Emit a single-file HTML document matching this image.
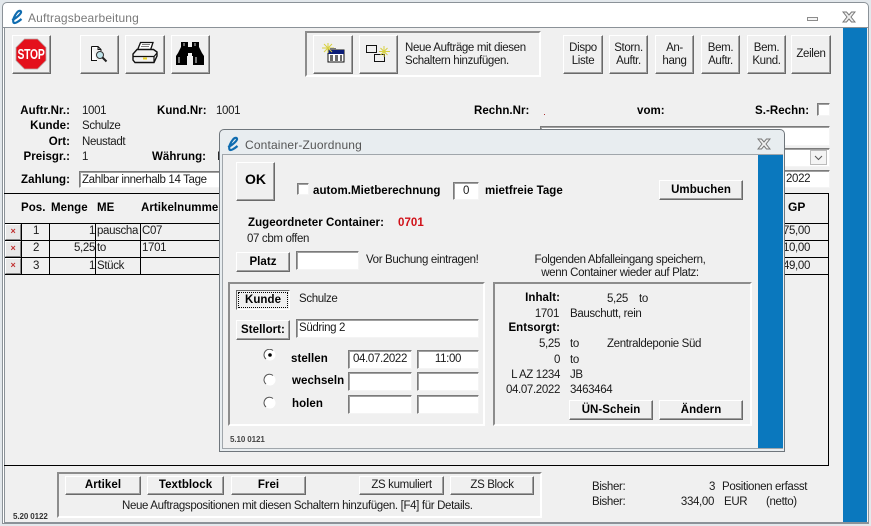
<!DOCTYPE html>
<html><head><meta charset="utf-8">
<style>
html,body{margin:0;padding:0;background:#dfe4e9}
#r{position:relative;width:871px;height:526px;overflow:hidden;background:#e3e8ec;font:11.5px "Liberation Sans",sans-serif;letter-spacing:-.35px;color:#111}
#r div,#r svg{position:absolute}
.t{white-space:nowrap;line-height:14px;color:#1a1a1a;margin-top:1px}
#r .b{font-weight:bold;letter-spacing:.05px;color:#000}
.btn{box-sizing:border-box;background:#f0f0f0;border:1px solid;border-color:#fff #6a6a6a #6a6a6a #fff;box-shadow:inset -1px -1px 0 #a0a0a0;text-align:center;align-items:center;justify-content:center;line-height:13px;color:#1a1a1a}
#r .btn{display:flex}
.in{box-sizing:border-box;background:#fff;border:1px solid;border-color:#7b7b7b #f4f4f4 #f4f4f4 #7b7b7b;box-shadow:inset 1px 1px 0 #a0a0a0;line-height:17px;padding-left:2px;color:#1a1a1a;white-space:nowrap;overflow:hidden}
.grp{box-sizing:border-box;border:2px solid;border-color:#8c8c8c #fff #fff #8c8c8c}
.l{background:#000}
.x{box-sizing:border-box;background:#e8e8e8;border:1px solid;border-color:#fff #888 #888 #fff;color:#c03030;font-size:9px;line-height:13px;text-align:center;font-weight:bold}
</style></head><body>
<div id="r">
<!-- main window -->
<div style="left:2px;top:2px;width:867px;height:522px;box-sizing:border-box;border:1px solid #8b9298;border-radius:5px 5px 0 0;background:#fff"></div>
<div style="left:3px;top:27px;width:865px;height:1px;background:#8b9298"></div>
<div style="left:4px;top:28px;width:864px;height:494px;background:#f0f0f0;border-left:1px solid #8b9298;box-sizing:border-box"></div>
<div style="left:843px;top:28px;width:24px;height:494px;background:#0a78be"></div>
<div style="left:4px;top:522px;width:864px;height:1px;background:#8b9298"></div>
<svg style="left:10px;top:9px" width="16" height="16" viewBox="0 0 16 16"><path d="M2 11C5 10 10 6 11 3.500C11.500 1.500 9 1 7 3.500C4.500 6.500 2.500 11 3.500 13.500C4.500 15 8 13 11.500 10" fill="none" stroke="#0f6cb0" stroke-width="2.200"/></svg>
<div class="t" style="left:28px;top:10px;font-size:12px;letter-spacing:.15px;color:#7a7a7a">Auftragsbearbeitung</div>
<div style="left:807px;top:17px;width:11px;height:4px;box-sizing:border-box;border:1px solid #8c8c8c;background:#f4f4f4"></div>
<svg style="left:842px;top:11px" width="14" height="12" viewBox="0 0 14 12"><path d="M1 1H4.500L7 4L9.500 1H13L9 6L13 11H9.500L7 8L4.500 11H1L5 6Z" fill="#f0f0f0" stroke="#777" stroke-width="1"/></svg>

<!-- toolbar -->
<div class="btn" style="left:12px;top:35px;width:39px;height:39px"></div>
<svg style="left:15px;top:38px" width="32" height="32" viewBox="0 0 32 32"><path d="M9.500 1H22.500L31 9.500V22.500L22.500 31H9.500L1 22.500V9.500Z" fill="#e4101c" stroke="#b8a8a8" stroke-width=".8"/><text x="16" y="21" text-anchor="middle" font-family="Liberation Sans" font-weight="bold" font-size="14.500" fill="#fff" textLength="27" lengthAdjust="spacingAndGlyphs">STOP</text></svg>
<div class="btn" style="left:80px;top:35px;width:39px;height:39px"></div>
<svg style="left:90px;top:45px" width="18" height="18" viewBox="0 0 18 18"><path d="M1.500 1.500H8L11 4.500V6M1.500 1.500V15.500H7M8 1.500V4.500H11" fill="#fff" stroke="#111"/><circle cx="10" cy="10" r="3.500" fill="#bfe3ea" stroke="#333"/><path d="M12.500 12.500L16.500 16.500" stroke="#222" stroke-width="2"/></svg>
<div class="btn" style="left:125px;top:35px;width:40px;height:39px"></div>
<svg style="left:132px;top:41px" width="26" height="23" viewBox="0 0 26 23"><path d="M8.500 1.500H21L18.500 9H5.500Z" fill="#fff" stroke="#111" stroke-width="1.300"/><path d="M10 3.500H18M9 5.500H17" stroke="#555" stroke-width=".8"/><path d="M5 8.500H21.500L25 11V15L22 21.500H3L1 19V13Z" fill="#f2f2f2" stroke="#111" stroke-width="1.400"/><path d="M1 15.500H22L25 12M22 15.500V21" fill="none" stroke="#111" stroke-width="1.200"/><rect x="11" y="16.500" width="4" height="2" fill="#e8d020"/></svg>
<div class="btn" style="left:171px;top:35px;width:39px;height:39px"></div>
<svg style="left:175px;top:41px" width="30" height="25" viewBox="0 0 30 25"><path d="M6 1H13V6H17V1H24V6L27 12L29 15V24H18V15H17V12H13V15H12V24H1V15L3 12L6 6Z" fill="#000"/><rect x="3" y="16" width="2" height="6" fill="#777"/><rect x="20" y="16" width="2" height="6" fill="#777"/><rect x="8" y="2" width="2" height="3" fill="#666"/><rect x="19" y="2" width="2" height="3" fill="#666"/></svg>

<div class="grp" style="left:305px;top:31px;width:236px;height:46px"></div>
<div class="btn" style="left:313px;top:35px;width:40px;height:39px"></div>
<svg style="left:321px;top:42px" width="24" height="21" viewBox="0 0 24 21"><rect x="7" y="8" width="16" height="12" fill="#fff" stroke="#111"/><rect x="7" y="8" width="16" height="4" fill="#0c1e78"/><path d="M9 14H12M14 14H17M19 14H21M9 16H12M14 16H17M19 16H21M9 18H12M14 18H17M19 18H21" stroke="#111" stroke-width="1.200"/><path d="M7 1V11M1 6H13M3 2L11 10M11 2L3 10" stroke="#d8d040" stroke-width="1"/><rect x="9" y="6" width="6" height="2" fill="#777"/></svg>
<div class="btn" style="left:359px;top:35px;width:39px;height:39px"></div>
<svg style="left:366px;top:44px" width="26" height="19" viewBox="0 0 26 19"><rect x=".5" y="1.500" width="10" height="7" fill="#f0f0f0" stroke="#111"/><rect x="8.500" y="10.500" width="10" height="7" fill="#f0f0f0" stroke="#111"/><path d="M18 2V13M13 7.500H24M14.500 4L21.500 11M21.500 4L14.500 11" stroke="#d8d040"/></svg>
<div class="t" style="left:405px;top:41px;line-height:13px">Neue Aufträge mit diesen<br>Schaltern hinzufügen.</div>
<div class="btn" style="left:563px;top:35px;width:40px;height:39px">Dispo<br>Liste</div>
<div class="btn" style="left:609px;top:35px;width:39px;height:39px">Storn.<br>Auftr.</div>
<div class="btn" style="left:655px;top:35px;width:39px;height:39px">An-<br>hang</div>
<div class="btn" style="left:701px;top:35px;width:39px;height:39px">Bem.<br>Auftr.</div>
<div class="btn" style="left:747px;top:35px;width:39px;height:39px">Bem.<br>Kund.</div>
<div class="btn" style="left:791px;top:35px;width:40px;height:39px">Zeilen</div>

<!-- form -->
<div class="t b" style="right:801px;top:103px">Auftr.Nr.:</div><div class="t" style="left:82px;top:103px">1001</div>
<div class="t b" style="right:801px;top:118px">Kunde:</div><div class="t" style="left:82px;top:118px">Schulze</div>
<div class="t b" style="right:801px;top:134px">Ort:</div><div class="t" style="left:82px;top:134px">Neustadt</div>
<div class="t b" style="right:801px;top:149px">Preisgr.:</div><div class="t" style="left:82px;top:149px">1</div>
<div class="t b" style="right:801px;top:172px">Zahlung:</div>
<div class="in" style="left:79px;top:171px;width:150px;height:17px;line-height:17px">Zahlbar innerhalb 14 Tage</div>
<div class="t b" style="left:157px;top:103px">Kund.Nr:</div><div class="t" style="left:216px;top:103px">1001</div>
<div class="t b" style="left:152px;top:149px">Währung:</div>
<div class="t" style="left:217px;top:149px">I</div>
<div class="t b" style="left:474px;top:103px">Rechn.Nr:</div>
<div style="left:544px;top:114px;width:1px;height:1px;background:#a33"></div>
<div class="t b" style="left:637px;top:103px">vom:</div>
<div class="t b" style="left:755px;top:103px">S.-Rechn:</div>
<div class="in" style="left:817px;top:103px;width:13px;height:13px"></div>
<div class="in" style="left:540px;top:126px;width:290px;height:20px"></div>
<div class="in" style="left:700px;top:148px;width:130px;height:19px"></div>
<div class="btn" style="left:810px;top:150px;width:17px;height:15px;background:#f4f4f4;border:1px solid #bbb;box-shadow:none"></div>
<svg style="left:814px;top:155px" width="9" height="6" viewBox="0 0 9 6"><path d="M1 1L4.500 4.500L8 1" fill="none" stroke="#555"/></svg>
<div class="in" style="left:760px;top:170px;width:70px;height:18px;padding-left:25px;line-height:16px">2022</div>

<!-- table -->
<div class="l" style="left:4px;top:193px;width:825px;height:1px"></div>
<div class="l" style="left:4px;top:465px;width:825px;height:1px"></div>
<div class="l" style="left:828px;top:193px;width:1px;height:273px"></div>
<div class="t b" style="left:21px;top:200px;font-size:11.500px">Pos.</div>
<div class="t b" style="left:51px;top:200px;font-size:11.500px">Menge</div>
<div class="t b" style="left:97px;top:200px;font-size:11.500px">ME</div>
<div class="t b" style="left:141px;top:200px;font-size:11.500px">Artikelnummer</div>
<div class="t b" style="left:788px;top:199px;font-size:12px">GP</div>
<div class="l" style="left:5px;top:223px;width:824px;height:1px"></div>
<div class="l" style="left:5px;top:240px;width:824px;height:1px"></div>
<div class="l" style="left:5px;top:257px;width:824px;height:1px"></div>
<div class="l" style="left:5px;top:274px;width:824px;height:1px"></div>
<div class="l" style="left:21px;top:223px;width:1px;height:51px"></div>
<div class="l" style="left:49px;top:223px;width:1px;height:51px"></div>
<div class="l" style="left:95px;top:223px;width:1px;height:51px"></div>
<div class="l" style="left:140px;top:223px;width:1px;height:51px"></div>
<div class="x" style="left:5px;top:224px;width:16px;height:16px">×</div>
<div class="x" style="left:5px;top:241px;width:16px;height:16px">×</div>
<div class="x" style="left:5px;top:258px;width:16px;height:16px">×</div>
<div class="t" style="left:33px;top:223px">1</div><div class="t" style="right:776px;top:223px">1</div><div class="t" style="left:97px;top:223px">pauscha</div><div class="t" style="left:142px;top:223px">C07</div>
<div class="t" style="left:33px;top:240px">2</div><div class="t" style="right:776px;top:240px">5,25</div><div class="t" style="left:97px;top:240px">to</div><div class="t" style="left:142px;top:240px">1701</div>
<div class="t" style="left:33px;top:258px">3</div><div class="t" style="right:776px;top:258px">1</div><div class="t" style="left:97px;top:258px">Stück</div>
<div class="t" style="right:61px;top:223px">75,00</div>
<div class="t" style="right:61px;top:240px">10,00</div>
<div class="t" style="right:61px;top:258px">49,00</div>

<!-- bottom -->
<div class="grp" style="left:57px;top:472px;width:485px;height:46px"></div>
<div class="btn b" style="left:65px;top:476px;width:76px;height:19px">Artikel</div>
<div class="btn b" style="left:147px;top:476px;width:77px;height:19px">Textblock</div>
<div class="btn b" style="left:231px;top:476px;width:75px;height:19px">Frei</div>
<div class="btn" style="left:359px;top:476px;width:85px;height:19px">ZS kumuliert</div>
<div class="btn" style="left:450px;top:476px;width:84px;height:19px">ZS Block</div>
<div class="t" style="left:122px;top:498px">Neue Auftragspositionen mit diesen Schaltern hinzufügen. [F4] für Details.</div>
<div class="t" style="left:13px;top:509px;font-size:8px;letter-spacing:-.1px;font-weight:bold;color:#333">5.20 0122</div>
<div class="t" style="left:592px;top:479px">Bisher:</div><div class="t" style="right:156px;top:479px">3</div><div class="t" style="left:722px;top:479px">Positionen erfasst</div>
<div class="t" style="left:592px;top:494px">Bisher:</div><div class="t" style="right:157px;top:494px">334,00</div><div class="t" style="left:724px;top:494px">EUR</div><div class="t" style="left:766px;top:494px">(netto)</div>

<!-- dialog -->
<div style="left:219px;top:129px;width:566px;height:323px;box-sizing:border-box;background:#e8edf0;border:1px solid #6f767c;border-radius:5px 5px 0 0"></div>
<div style="left:222px;top:154px;width:561px;height:295px;background:#f0f0f0;border:1px solid #a0a6ab;box-sizing:border-box"></div>
<div style="left:758px;top:155px;width:25px;height:293px;background:#0a78be"></div>
<svg style="left:226px;top:136px" width="16" height="16" viewBox="0 0 16 16"><path d="M2 11C5 10 10 6 11 3.500C11.500 1.500 9 1 7 3.500C4.500 6.500 2.500 11 3.500 13.500C4.500 15 8 13 11.500 10" fill="none" stroke="#0f6cb0" stroke-width="2.200"/></svg>
<div class="t" style="left:245px;top:137px;font-size:12px;letter-spacing:.15px;color:#555">Container-Zuordnung</div>
<svg style="left:757px;top:138px" width="14" height="12" viewBox="0 0 14 12"><path d="M1 1H4.500L7 4L9.500 1H13L9 6L13 11H9.500L7 8L4.500 11H1L5 6Z" fill="#f0f0f0" stroke="#777" stroke-width="1"/></svg>

<div class="btn b" style="left:236px;top:162px;width:39px;height:39px;font-size:14px;padding-bottom:4px">OK</div>
<div class="in" style="left:297px;top:183px;width:12px;height:12px"></div>
<div class="t b" style="left:313px;top:183px">autom.Mietberechnung</div>
<div class="in" style="left:453px;top:182px;width:26px;height:18px;text-align:center;padding:0;line-height:16px">0</div>
<div class="t b" style="left:485px;top:183px">mietfreie Tage</div>
<div class="btn b" style="left:659px;top:180px;width:84px;height:20px">Umbuchen</div>
<div class="t b" style="left:248px;top:215px">Zugeordneter Container:</div>
<div class="t b" style="left:398px;top:215px;color:#d01018">0701</div>
<div class="t" style="left:247px;top:231px">07 cbm offen</div>
<div class="btn b" style="left:236px;top:252px;width:54px;height:20px">Platz</div>
<div class="in" style="left:296px;top:251px;width:63px;height:19px"></div>
<div class="t" style="left:366px;top:252px">Vor Buchung eintragen!</div>
<div class="t" style="left:490px;top:252px;width:260px;text-align:center">Folgenden Abfalleingang speichern,</div>
<div class="t" style="left:490px;top:265px;width:260px;text-align:center">wenn Container wieder auf Platz:</div>

<div class="grp" style="left:228px;top:282px;width:257px;height:144px"></div>
<div class="btn b" style="left:236px;top:290px;width:54px;height:20px;border-color:#6a6a6a #fff #fff #6a6a6a;box-shadow:none;outline:1px dotted #000;outline-offset:-3px">Kunde</div>
<div class="t" style="left:299px;top:291px">Schulze</div>
<div class="btn b" style="left:236px;top:320px;width:54px;height:20px">Stellort:</div>
<div class="in" style="left:296px;top:319px;width:183px;height:19px">Südring 2</div>
<svg style="left:263px;top:349px" width="14" height="60" viewBox="0 0 14 60"><g fill="#fff" stroke="none"><circle cx="7" cy="6" r="5.500"/><circle cx="7" cy="31" r="5.500"/><circle cx="7" cy="54" r="5.500"/></g><g fill="none" stroke="#555"><path d="M3 10A5.500 5.500 0 0 1 10 1.500M3 35A5.500 5.500 0 0 1 10 26.500M3 58A5.500 5.500 0 0 1 10 49.500"/></g><circle cx="7" cy="6" r="1.800" fill="#000"/></svg>
<div class="t b" style="left:291px;top:351px">stellen</div>
<div class="t b" style="left:292px;top:373px">wechseln</div>
<div class="t b" style="left:292px;top:396px">holen</div>
<div class="in" style="left:348px;top:350px;width:64px;height:19px;text-align:center;padding:0">04.07.2022</div>
<div class="in" style="left:417px;top:350px;width:62px;height:19px;text-align:center;padding:0">11:00</div>
<div class="in" style="left:348px;top:372px;width:64px;height:19px"></div>
<div class="in" style="left:417px;top:372px;width:62px;height:19px"></div>
<div class="in" style="left:348px;top:395px;width:64px;height:19px"></div>
<div class="in" style="left:417px;top:395px;width:62px;height:19px"></div>
<div class="t" style="left:230px;top:432px;font-size:8px;letter-spacing:-.1px;font-weight:bold;color:#444">5.10 0121</div>

<div class="grp" style="left:493px;top:282px;width:259px;height:144px"></div>
<div class="t b" style="right:311px;top:290px">Inhalt:</div><div class="t" style="left:607px;top:291px">5,25</div><div class="t" style="left:639px;top:291px">to</div>
<div class="t" style="right:312px;top:306px">1701</div><div class="t" style="left:570px;top:306px">Bauschutt, rein</div>
<div class="t b" style="right:311px;top:320px">Entsorgt:</div>
<div class="t" style="right:311px;top:336px">5,25</div><div class="t" style="left:570px;top:336px">to</div><div class="t" style="left:607px;top:336px">Zentraldeponie Süd</div>
<div class="t" style="right:311px;top:352px">0</div><div class="t" style="left:570px;top:352px">to</div>
<div class="t" style="right:311px;top:367px">L AZ 1234</div><div class="t" style="left:570px;top:367px">JB</div>
<div class="t" style="right:311px;top:382px">04.07.2022</div><div class="t" style="left:570px;top:382px">3463464</div>
<div class="btn b" style="left:569px;top:400px;width:84px;height:20px">ÜN-Schein</div>
<div class="btn b" style="left:659px;top:400px;width:84px;height:20px">Ändern</div>
</div>
</body></html>
